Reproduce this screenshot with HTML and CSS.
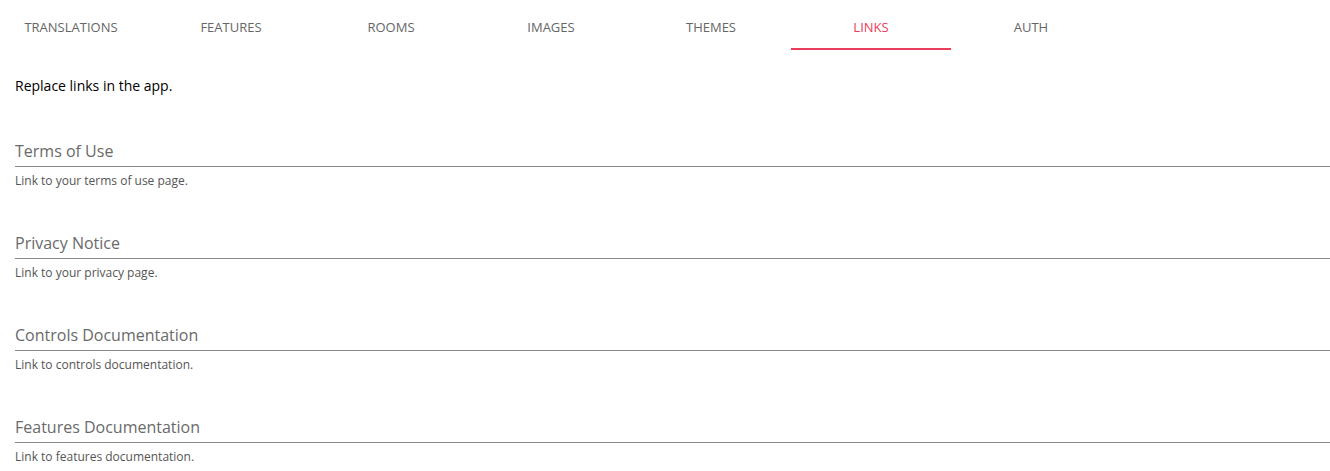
FILE: index.html
```html
<!DOCTYPE html>
<html>
<head>
    <title>Links</title>
    <link rel="stylesheet" href="styles.css">
</head>
<body>
    <nav class="tabs">
        <div class="tab">TRANSLATIONS</div>
        <div class="tab">FEATURES</div>
        <div class="tab">ROOMS</div>
        <div class="tab">IMAGES</div>
        <div class="tab">THEMES</div>
        <div class="tab active">LINKS</div>
        <div class="tab">AUTH</div>
    </nav>

    <div class="content">
        <p class="intro">Replace links in the app.</p>

        <div class="field">
            <input type="text" placeholder="Terms of Use">
            <span class="hint">Link to your terms of use page.</span>
        </div>
        <div class="field">
            <input type="text" placeholder="Privacy Notice">
            <span class="hint">Link to your privacy page.</span>
        </div>
        <div class="field">
            <input type="text" placeholder="Controls Documentation">
            <span class="hint">Link to controls documentation.</span>
        </div>
        <div class="field">
            <input type="text" placeholder="Features Documentation">
            <span class="hint">Link to features documentation.</span>
        </div>
    </div>
</body>
</html>
```

FILE: styles.css
```css
body { margin: 0; font-family: "Open Sans", Arial, sans-serif; background: #fff; color: #000; overflow: hidden; }
.tabs { display: flex; margin-left: -9px; height: 50px; }
.tab { width: 160px; flex: none; display: flex; align-items: center; justify-content: center; font-size: 13px; color: #666; box-sizing: border-box; padding-top: 4px; }
.tab.active { color: #ec3d5c; border-bottom: 2px solid #ec3d5c; padding-top: 6px; }
.content { padding-left: 15px; }
.intro { font-size: 14px; line-height: 19px; margin: 26px 0 39px; }
.field { display: flex; flex-direction: column; margin-bottom: 37px; }
.field:last-child { margin-bottom: 0; }
.field input { border: none; border-bottom: 1px solid #8a8a8a; font-family: inherit; font-size: 16px; line-height: 22px; height: 33px; padding: 6px 0 4px; box-sizing: border-box; outline: none; background: transparent; }
.field input::placeholder { color: #6a6a6a; }
.hint { font-size: 12px; line-height: 17px; color: #555; margin-top: 5px; }
```
